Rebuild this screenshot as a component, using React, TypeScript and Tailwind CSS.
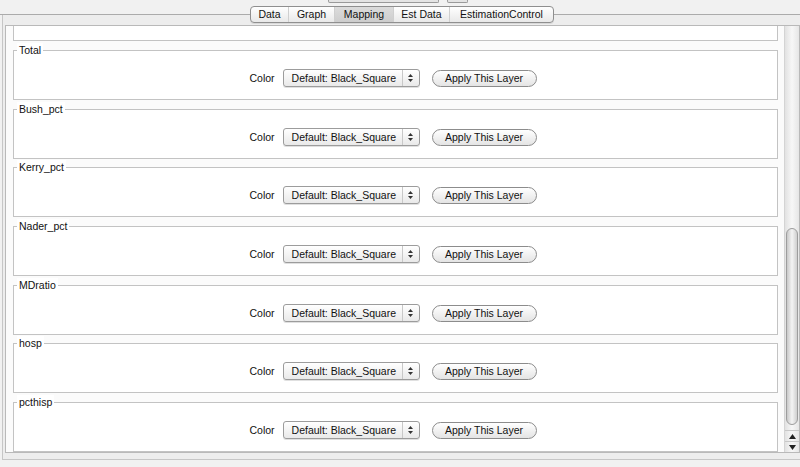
const layers = ['Total', 'Bush_pct', 'Kerry_pct', 'Nader_pct', 'MDratio', 'hosp', 'pcthisp'];
const tabs = [
  { label: 'Data', w: 'w-[37px]' },
  { label: 'Graph', w: 'w-[46px]' },
  { label: 'Mapping', w: 'w-[59px]', active: true },
  { label: 'Est Data', w: 'w-[56px]' },
  { label: 'EstimationControl', w: 'w-[104px]' },
];

function LayerBox({ title }: { title: string }) {
  return (
    <div className="relative h-[50px] shrink-0 border border-[#c3c3c3] bg-white flex justify-center items-start pt-[18px] pr-[5px]">
      <span className="absolute -top-[8px] left-[3px] px-[2px] bg-white text-[10.5px] leading-[14px] text-[#111] whitespace-nowrap">
        {title}
      </span>
      <span className="text-[10.5px] leading-[18px] text-[#111] mr-[8px]">Color</span>
      <div className="w-[137px] h-[18px] flex border border-[#9c9c9c] rounded-[3px] bg-gradient-to-b from-white to-[#e9e9e9] shadow-[0_1px_0_#e0e0e0]">
        <span className="flex-1 min-w-0 overflow-hidden whitespace-nowrap pl-[8px] text-[10.5px] leading-[16px] text-[#111]">
          Default: Black_Square
        </span>
        <div className="w-[17px] shrink-0 border-l border-[#c8c8c8] flex flex-col items-center justify-center gap-[2px]">
          <svg width="5" height="3" viewBox="0 0 5 3"><path d="M0 3 L2.5 0 L5 3 Z" fill="#333" /></svg>
          <svg width="5" height="3" viewBox="0 0 5 3"><path d="M0 0 L2.5 3 L5 0 Z" fill="#333" /></svg>
        </div>
      </div>
      <button className="ml-[12px] mt-[1px] w-[105px] h-[17px] rounded-full border border-[#8c8c8c] bg-gradient-to-b from-white to-[#e4e4e4] text-[10.5px] leading-[15px] text-[#111] whitespace-nowrap">
        Apply This Layer
      </button>
    </div>
  );
}

export default function App() {
  return (
    <div
      className="w-[800px] h-[467px] bg-[#f1f1f1] flex flex-col overflow-hidden"
      style={{ fontFamily: '"Liberation Sans", Arial, sans-serif' }}
    >
      <div className="relative h-[15px] shrink-0 border-b border-[#ababab]">
        <div className="absolute top-0 left-[328px] w-[111px] h-[3px] border-x border-b border-[#9a9a9a] rounded-b-[2px] bg-[#e4e4e4]" />
        <div className="absolute top-0 left-[447px] w-[21px] h-[3px] border-x border-b border-[#9a9a9a] rounded-b-[2px] bg-[#e4e4e4]" />
        <div className="absolute top-[6px] left-[250px] h-[17px] flex border border-[#8f8f8f] rounded-[4px] overflow-hidden bg-gradient-to-b from-white to-[#e8e8e8] shadow-[0_1px_0_#d8d8d8]">
          {tabs.map((t, i) => (
            <div
              key={t.label}
              className={`${t.w} flex items-center justify-center whitespace-nowrap text-[10.5px] leading-[15px] text-[#111] ${
                i > 0 ? 'border-l border-[#cfcfcf]' : ''
              } ${t.active ? 'bg-gradient-to-b from-[#dcdcdc] to-[#cdcdcd]' : ''}`}
            >
              {t.label}
            </div>
          ))}
        </div>
      </div>

      <div className="flex-1 min-h-0 flex flex-col ml-[2px] mb-[7px] border-l border-b border-[#c6c6c6] bg-[#ededed] pt-[10px] pl-[2px] pb-[6px]">
        <div className="flex-1 min-h-0 flex border border-[#b9b9b9] bg-[#fbfbfb]">
          <div className="flex-1 min-w-0 overflow-hidden pl-[7px] pr-[5px]">
            <div className="flex flex-col gap-[8.67px] mt-[-34.67px]">
              <div className="h-[50px] shrink-0 border border-[#c3c3c3] bg-white" />
              {layers.map((l) => (
                <LayerBox key={l} title={l} />
              ))}
            </div>
          </div>
          <div className="w-[15px] ml-[1px] flex flex-col border-l border-[#d4d4d4] bg-gradient-to-r from-[#e2e2e2] via-[#f7f7f7] to-[#e6e6e6]">
            <div className="flex-1 flex flex-col justify-end pb-[5px] pt-[2px] items-center">
              <div className="w-[12px] h-[197px] rounded-full border border-[#9d9d9d] bg-gradient-to-r from-[#c9c9c9] via-[#f4f4f4] to-[#cfcfcf]" />
            </div>
            <div className="h-[11px] flex items-center justify-center border-t border-[#c8c8c8]">
              <svg width="7" height="5" viewBox="0 0 7 5"><path d="M0 5 L3.5 0 L7 5 Z" fill="#222" /></svg>
            </div>
            <div className="h-[11px] flex items-center justify-center border-t border-[#c8c8c8]">
              <svg width="7" height="5" viewBox="0 0 7 5"><path d="M0 0 L3.5 5 L7 0 Z" fill="#222" /></svg>
            </div>
          </div>
        </div>
      </div>
    </div>
  );
}
